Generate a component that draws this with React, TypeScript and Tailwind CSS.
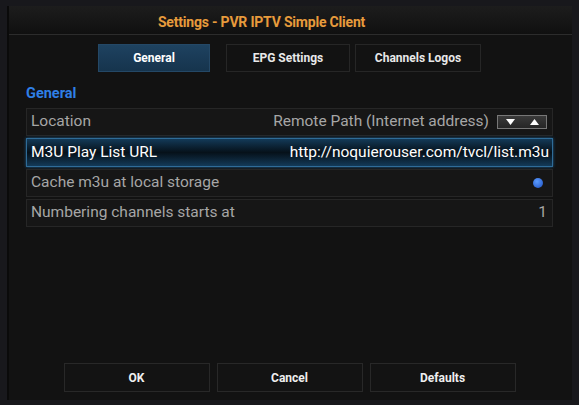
const rowBase =
  'flex items-center justify-between h-[28px] pl-[4px] pr-[5px] border border-[#262626] bg-[#161616] text-[15.5px] text-[#a6a6a6]';

function Tab({ label, active, width }: { label: string; active?: boolean; width: string }) {
  return (
    <div
      className={`${width} h-[28px] flex items-center justify-center text-[12px] font-bold border ${
        active
          ? 'bg-gradient-to-b from-[#1e4260] to-[#16344d] border-[#244866] text-white'
          : 'bg-[#121212] border-[#262626] text-[#e8e8e8]'
      }`}
    >
      {label}
    </div>
  );
}

function Button({ label }: { label: string }) {
  return (
    <div className="w-[146px] h-[29px] flex items-center justify-center text-[12px] font-bold text-[#efefef] bg-[#131313] border border-[#282828]">
      {label}
    </div>
  );
}

export default function App() {
  return (
    <div
      className="w-[579px] h-[405px] bg-[#18181c] pt-[6px] pl-[7px] pr-[7px] pb-[5px] overflow-hidden"
      style={{ fontFamily: 'Roboto, "Liberation Sans", sans-serif' }}
    >
      <div className="h-full flex flex-col bg-[#121212] border-l-[2px] border-[#0a0a0a]">
        {/* Title */}
        <div className="h-[29px] flex items-center justify-center pt-[4px] pr-[58px] bg-gradient-to-b from-[#1d1d1d] to-[#101010] border-b border-[#2c2c2c]">
          <span className="text-[14px] font-bold text-[#e79b3c] tracking-[-0.2px]">
            Settings - PVR IPTV Simple Client
          </span>
        </div>

        {/* Tabs */}
        <div className="flex justify-center gap-[4px] mt-[9px] pr-[2px]">
          <div className="flex gap-[16px]">
            <Tab label="General" active width="w-[112px]" />
          </div>
          <div className="flex gap-[5px] ml-[12px]">
            <Tab label="EPG Settings" width="w-[124px]" />
            <Tab label="Channels Logos" width="w-[126px]" />
          </div>
        </div>

        {/* Category */}
        <div className="pl-[17px] pr-[19px] mt-[10px]">
          <div className="text-[14.5px] font-bold text-[#2f7fe6] h-[24px] leading-[24px]">General</div>
          <div className="flex flex-col gap-[2px] mt-[2px]">
            <div className={rowBase}>
              <span>Location</span>
              <div className="flex items-center gap-[8px]">
                <span>Remote Path (Internet address)</span>
                <div className="w-[50px] h-[14px] flex items-center justify-around border border-[#777] bg-gradient-to-b from-[#3a3a3a] to-[#262626]">
                  <svg width="9" height="6" viewBox="0 0 9 6">
                    <path d="M0 0h9L4.5 6z" fill="#fff" />
                  </svg>
                  <svg width="9" height="6" viewBox="0 0 9 6">
                    <path d="M0 6h9L4.5 0z" fill="#fff" />
                  </svg>
                </div>
              </div>
            </div>
            <div className="flex items-center justify-between h-[29px] pl-[4px] pr-[3px] border border-[#2f6c98] text-[15.5px] text-white bg-gradient-to-b from-[#133a58] via-[#06111a] to-[#133a58] shadow-[0_0_3px_#1d5a88]">
              <span>M3U Play List URL</span>
              <span>http://noquierouser.com/tvcl/list.m3u</span>
            </div>
            <div className={rowBase}>
              <span>Cache m3u at local storage</span>
              <span className="w-[10px] h-[10px] rounded-full bg-[radial-gradient(circle_at_40%_35%,#5b9cff,#1d4fc0)] mr-[4px]" />
            </div>
            <div className={rowBase}>
              <span>Numbering channels starts at</span>
              <span>1</span>
            </div>
          </div>
        </div>

        <div className="flex-1" />

        {/* Buttons */}
        <div className="flex justify-center gap-[7px] mb-[8px] pr-[2px]">
          <Button label="OK" />
          <Button label="Cancel" />
          <Button label="Defaults" />
        </div>
      </div>
    </div>
  );
}
